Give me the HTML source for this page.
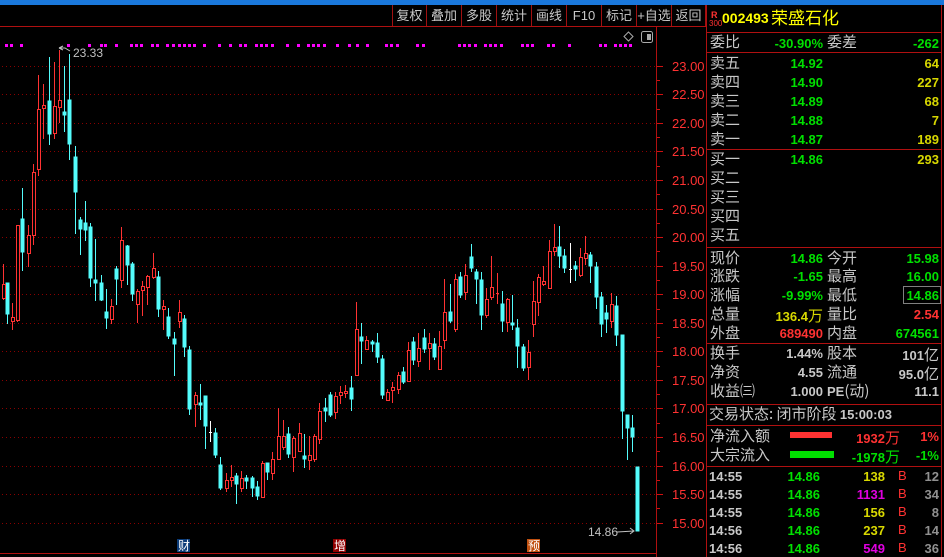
<!DOCTYPE html>
<html><head><meta charset="utf-8"><style>
*{margin:0;padding:0;box-sizing:border-box}
body{width:944px;height:557px;background:#000;overflow:hidden;position:relative;font-family:"Liberation Sans","Noto Sans CJK SC",sans-serif}
.a{position:absolute;white-space:nowrap;line-height:1}
.tb{position:absolute;top:5px;height:21px;border-left:1px solid #a01010;color:#c8c8c8;font-size:13px;text-align:center;line-height:21px;font-family:"Liberation Sans","Noto Sans CJK SC",sans-serif}
.lb{position:absolute;color:#c8c8c8;font-size:15px;line-height:1;font-family:"Noto Sans CJK SC",sans-serif;white-space:nowrap}
.n{position:absolute;font-size:13px;font-weight:bold;line-height:1;text-align:right;white-space:nowrap;font-family:"Liberation Sans","Noto Sans CJK SC",sans-serif}
.g{color:#00e000}.y{color:#d8d800}.r{color:#ff3232}.w{color:#c8c8c8}.m{color:#e000e0}
.hl{position:absolute;left:707px;width:234px;height:1px;background:#b01010}
</style></head><body>
<div class="a" style="left:0;top:0;width:944px;height:5px;background:#1a78dc"></div>
<div class="tb" style="left:392px;width:34px">复权</div>
<div class="tb" style="left:426px;width:35px">叠加</div>
<div class="tb" style="left:461px;width:35px">多股</div>
<div class="tb" style="left:496px;width:35px">统计</div>
<div class="tb" style="left:531px;width:35px">画线</div>
<div class="tb" style="left:566px;width:35px">F10</div>
<div class="tb" style="left:601px;width:35px">标记</div>
<div class="tb" style="left:636px;width:35px">+自选</div>
<div class="tb" style="left:671px;width:35px;border-right:1px solid #a01010">返回</div>
<svg class="a" style="left:0;top:0" width="707" height="557" xmlns="http://www.w3.org/2000/svg">
<line x1="0" y1="26.5" x2="707" y2="26.5" stroke="#b01010"/>
<line x1="656.5" y1="27" x2="656.5" y2="557" stroke="#b01010"/>
<line x1="706.5" y1="5" x2="706.5" y2="557" stroke="#b01010"/>
<line x1="0" y1="553.5" x2="656" y2="553.5" stroke="#b01010"/>
<g stroke="#8a0000" stroke-dasharray="1 3">
<line x1="2" y1="66.5" x2="656" y2="66.5"/><line x1="2" y1="94.5" x2="656" y2="94.5"/><line x1="2" y1="123.5" x2="656" y2="123.5"/><line x1="2" y1="151.5" x2="656" y2="151.5"/><line x1="2" y1="180.5" x2="656" y2="180.5"/><line x1="2" y1="209.5" x2="656" y2="209.5"/><line x1="2" y1="237.5" x2="656" y2="237.5"/><line x1="2" y1="266.5" x2="656" y2="266.5"/><line x1="2" y1="294.5" x2="656" y2="294.5"/><line x1="2" y1="323.5" x2="656" y2="323.5"/><line x1="2" y1="351.5" x2="656" y2="351.5"/><line x1="2" y1="380.5" x2="656" y2="380.5"/><line x1="2" y1="408.5" x2="656" y2="408.5"/><line x1="2" y1="437.5" x2="656" y2="437.5"/><line x1="2" y1="466.5" x2="656" y2="466.5"/><line x1="2" y1="494.5" x2="656" y2="494.5"/><line x1="2" y1="523.5" x2="656" y2="523.5"/>
</g>
<g stroke="#d01010">
<line x1="657" y1="66.5" x2="663" y2="66.5"/><line x1="657" y1="80.5" x2="660" y2="80.5"/><line x1="657" y1="94.5" x2="663" y2="94.5"/><line x1="657" y1="109.5" x2="660" y2="109.5"/><line x1="657" y1="123.5" x2="663" y2="123.5"/><line x1="657" y1="137.5" x2="660" y2="137.5"/><line x1="657" y1="151.5" x2="663" y2="151.5"/><line x1="657" y1="166.5" x2="660" y2="166.5"/><line x1="657" y1="180.5" x2="663" y2="180.5"/><line x1="657" y1="194.5" x2="660" y2="194.5"/><line x1="657" y1="209.5" x2="663" y2="209.5"/><line x1="657" y1="223.5" x2="660" y2="223.5"/><line x1="657" y1="237.5" x2="663" y2="237.5"/><line x1="657" y1="251.5" x2="660" y2="251.5"/><line x1="657" y1="266.5" x2="663" y2="266.5"/><line x1="657" y1="280.5" x2="660" y2="280.5"/><line x1="657" y1="294.5" x2="663" y2="294.5"/><line x1="657" y1="309.5" x2="660" y2="309.5"/><line x1="657" y1="323.5" x2="663" y2="323.5"/><line x1="657" y1="337.5" x2="660" y2="337.5"/><line x1="657" y1="351.5" x2="663" y2="351.5"/><line x1="657" y1="366.5" x2="660" y2="366.5"/><line x1="657" y1="380.5" x2="663" y2="380.5"/><line x1="657" y1="394.5" x2="660" y2="394.5"/><line x1="657" y1="408.5" x2="663" y2="408.5"/><line x1="657" y1="423.5" x2="660" y2="423.5"/><line x1="657" y1="437.5" x2="663" y2="437.5"/><line x1="657" y1="451.5" x2="660" y2="451.5"/><line x1="657" y1="466.5" x2="663" y2="466.5"/><line x1="657" y1="480.5" x2="660" y2="480.5"/><line x1="657" y1="494.5" x2="663" y2="494.5"/><line x1="657" y1="508.5" x2="660" y2="508.5"/><line x1="657" y1="523.5" x2="663" y2="523.5"/>
</g>
<g fill="#ff3232" font-family="Liberation Sans" font-size="13">
<text x="672" y="71">23.00</text><text x="672" y="99">22.50</text><text x="672" y="128">22.00</text><text x="672" y="156">21.50</text><text x="672" y="185">21.00</text><text x="672" y="214">20.50</text><text x="672" y="242">20.00</text><text x="672" y="271">19.50</text><text x="672" y="299">19.00</text><text x="672" y="328">18.50</text><text x="672" y="356">18.00</text><text x="672" y="385">17.50</text><text x="672" y="413">17.00</text><text x="672" y="442">16.50</text><text x="672" y="471">16.00</text><text x="672" y="499">15.50</text><text x="672" y="528">15.00</text>
</g>
<g fill="#ff00ff">
<rect x="5" y="44" width="3" height="3"/><rect x="10" y="44" width="3" height="3"/><rect x="20" y="44" width="3" height="3"/><rect x="67" y="44" width="3" height="3"/><rect x="88" y="44" width="3" height="3"/><rect x="100" y="44" width="3" height="3"/><rect x="104" y="44" width="3" height="3"/><rect x="115" y="44" width="3" height="3"/><rect x="130" y="44" width="3" height="3"/><rect x="135" y="44" width="3" height="3"/><rect x="140" y="44" width="3" height="3"/><rect x="151" y="44" width="3" height="3"/><rect x="156" y="44" width="3" height="3"/><rect x="166" y="44" width="3" height="3"/><rect x="172" y="44" width="3" height="3"/><rect x="178" y="44" width="3" height="3"/><rect x="183" y="44" width="3" height="3"/><rect x="188" y="44" width="3" height="3"/><rect x="193" y="44" width="3" height="3"/><rect x="203" y="44" width="3" height="3"/><rect x="218" y="44" width="3" height="3"/><rect x="229" y="44" width="3" height="3"/><rect x="239" y="44" width="3" height="3"/><rect x="244" y="44" width="3" height="3"/><rect x="255" y="44" width="3" height="3"/><rect x="260" y="44" width="3" height="3"/><rect x="265" y="44" width="3" height="3"/><rect x="271" y="44" width="3" height="3"/><rect x="286" y="44" width="3" height="3"/><rect x="297" y="44" width="3" height="3"/><rect x="307" y="44" width="3" height="3"/><rect x="312" y="44" width="3" height="3"/><rect x="317" y="44" width="3" height="3"/><rect x="323" y="44" width="3" height="3"/><rect x="336" y="44" width="3" height="3"/><rect x="348" y="44" width="3" height="3"/><rect x="356" y="44" width="3" height="3"/><rect x="366" y="44" width="3" height="3"/><rect x="385" y="44" width="3" height="3"/><rect x="390" y="44" width="3" height="3"/><rect x="396" y="44" width="3" height="3"/><rect x="416" y="44" width="3" height="3"/><rect x="422" y="44" width="3" height="3"/><rect x="458" y="44" width="3" height="3"/><rect x="463" y="44" width="3" height="3"/><rect x="468" y="44" width="3" height="3"/><rect x="474" y="44" width="3" height="3"/><rect x="484" y="44" width="3" height="3"/><rect x="489" y="44" width="3" height="3"/><rect x="494" y="44" width="3" height="3"/><rect x="500" y="44" width="3" height="3"/><rect x="521" y="44" width="3" height="3"/><rect x="526" y="44" width="3" height="3"/><rect x="531" y="44" width="3" height="3"/><rect x="547" y="44" width="3" height="3"/><rect x="552" y="44" width="3" height="3"/><rect x="568" y="44" width="3" height="3"/><rect x="599" y="44" width="3" height="3"/><rect x="604" y="44" width="3" height="3"/><rect x="614" y="44" width="3" height="3"/><rect x="619" y="44" width="3" height="3"/><rect x="624" y="44" width="3" height="3"/><rect x="629" y="44" width="3" height="3"/>
</g>
<path d="M628.5 32 L633 36.5 L628.5 41 L624 36.5 Z" fill="none" stroke="#aaa"/>
<rect x="641.5" y="31.5" width="11" height="11" rx="2" fill="none" stroke="#aaa"/><rect x="647" y="34" width="4" height="6" fill="#aaa"/>
<g stroke="#54fcfc" fill="#54fcfc" stroke-width="1">
<line x1="7.5" y1="283" x2="7.5" y2="324"/><rect x="6" y="283" width="3" height="31"/>
<line x1="22.5" y1="188" x2="22.5" y2="271"/><rect x="21" y="219" width="3" height="33"/>
<line x1="49.5" y1="57" x2="49.5" y2="145"/><rect x="48" y="101" width="3" height="33"/>
<line x1="64.5" y1="66" x2="64.5" y2="132"/><rect x="63" y="112" width="3" height="3"/>
<line x1="69.5" y1="54" x2="69.5" y2="160"/><rect x="68" y="100" width="3" height="44"/>
<line x1="75.5" y1="146" x2="75.5" y2="234"/><rect x="74" y="157" width="3" height="35"/>
<line x1="80.5" y1="217" x2="80.5" y2="255"/><rect x="79" y="220" width="3" height="9"/>
<line x1="85.5" y1="201" x2="85.5" y2="241"/><rect x="84" y="223" width="3" height="7"/>
<line x1="90.5" y1="223" x2="90.5" y2="287"/><rect x="89" y="227" width="3" height="51"/>
<line x1="95.5" y1="239" x2="95.5" y2="301"/><rect x="94" y="280" width="3" height="3"/>
<line x1="101.5" y1="275" x2="101.5" y2="301"/><rect x="100" y="283" width="3" height="17"/>
<line x1="106.5" y1="289" x2="106.5" y2="329"/><rect x="105" y="312" width="3" height="6"/>
<line x1="116.5" y1="266" x2="116.5" y2="305"/><rect x="115" y="269" width="3" height="10"/>
<line x1="127.5" y1="245" x2="127.5" y2="285"/><rect x="126" y="246" width="3" height="19"/>
<line x1="132.5" y1="262" x2="132.5" y2="301"/><rect x="131" y="264" width="3" height="30"/>
<line x1="158.5" y1="271" x2="158.5" y2="317"/><rect x="157" y="277" width="3" height="32"/>
<line x1="168.5" y1="308" x2="168.5" y2="339"/><rect x="167" y="317" width="3" height="19"/>
<line x1="174.5" y1="332" x2="174.5" y2="376"/><rect x="173" y="339" width="3" height="5"/>
<line x1="184.5" y1="315" x2="184.5" y2="357"/><rect x="183" y="319" width="3" height="28"/>
<line x1="189.5" y1="346" x2="189.5" y2="415"/><rect x="188" y="350" width="3" height="59"/>
<line x1="200.5" y1="384" x2="200.5" y2="420"/><rect x="199" y="403" width="3" height="2"/>
<line x1="205.5" y1="396" x2="205.5" y2="449"/><rect x="204" y="396" width="3" height="30"/>
<line x1="215.5" y1="428" x2="215.5" y2="458"/><rect x="214" y="433" width="3" height="22"/>
<line x1="220.5" y1="457" x2="220.5" y2="490"/><rect x="219" y="465" width="3" height="23"/>
<line x1="236.5" y1="473" x2="236.5" y2="504"/><rect x="235" y="476" width="3" height="8"/>
<line x1="246.5" y1="475" x2="246.5" y2="489"/><rect x="245" y="478" width="3" height="3"/>
<line x1="252.5" y1="476" x2="252.5" y2="497"/><rect x="251" y="478" width="3" height="10"/>
<line x1="257.5" y1="481" x2="257.5" y2="500"/><rect x="256" y="487" width="3" height="9"/>
<line x1="267.5" y1="463" x2="267.5" y2="480"/><rect x="266" y="463" width="3" height="9"/>
<line x1="288.5" y1="427" x2="288.5" y2="458"/><rect x="287" y="434" width="3" height="20"/>
<line x1="304.5" y1="434" x2="304.5" y2="468"/><rect x="303" y="456" width="3" height="3"/>
<line x1="325.5" y1="398" x2="325.5" y2="422"/><rect x="324" y="408" width="3" height="3"/>
<line x1="330.5" y1="392" x2="330.5" y2="417"/><rect x="329" y="395" width="3" height="20"/>
<line x1="351.5" y1="376" x2="351.5" y2="411"/><rect x="350" y="388" width="3" height="11"/>
<line x1="361.5" y1="323" x2="361.5" y2="364"/><rect x="360" y="337" width="3" height="4"/>
<line x1="372.5" y1="340" x2="372.5" y2="352"/><rect x="371" y="342" width="3" height="2"/>
<line x1="377.5" y1="333" x2="377.5" y2="363"/><rect x="376" y="343" width="3" height="14"/>
<line x1="382.5" y1="355" x2="382.5" y2="399"/><rect x="381" y="359" width="3" height="36"/>
<line x1="403.5" y1="367" x2="403.5" y2="384"/><rect x="402" y="372" width="3" height="10"/>
<line x1="413.5" y1="337" x2="413.5" y2="365"/><rect x="412" y="342" width="3" height="18"/>
<line x1="424.5" y1="329" x2="424.5" y2="353"/><rect x="423" y="338" width="3" height="11"/>
<line x1="434.5" y1="338" x2="434.5" y2="360"/><rect x="433" y="344" width="3" height="13"/>
<line x1="450.5" y1="284" x2="450.5" y2="323"/><rect x="449" y="312" width="3" height="9"/>
<line x1="460.5" y1="272" x2="460.5" y2="298"/><rect x="459" y="277" width="3" height="18"/>
<line x1="471.5" y1="244" x2="471.5" y2="272"/><rect x="470" y="257" width="3" height="11"/>
<line x1="476.5" y1="269" x2="476.5" y2="304"/><rect x="475" y="272" width="3" height="7"/>
<line x1="481.5" y1="272" x2="481.5" y2="330"/><rect x="480" y="280" width="3" height="35"/>
<line x1="502.5" y1="291" x2="502.5" y2="332"/><rect x="501" y="304" width="3" height="17"/>
<line x1="512.5" y1="295" x2="512.5" y2="330"/><rect x="511" y="323" width="3" height="2"/>
<line x1="517.5" y1="319" x2="517.5" y2="368"/><rect x="516" y="328" width="3" height="18"/>
<line x1="523.5" y1="344" x2="523.5" y2="371"/><rect x="522" y="347" width="3" height="21"/>
<line x1="559.5" y1="226" x2="559.5" y2="268"/><rect x="558" y="247" width="3" height="9"/>
<line x1="564.5" y1="249" x2="564.5" y2="273"/><rect x="563" y="256" width="3" height="12"/>
<line x1="575.5" y1="261" x2="575.5" y2="281"/><rect x="574" y="266" width="3" height="3"/>
<line x1="590.5" y1="252" x2="590.5" y2="283"/><rect x="589" y="255" width="3" height="11"/>
<line x1="596.5" y1="262" x2="596.5" y2="309"/><rect x="595" y="267" width="3" height="30"/>
<line x1="601.5" y1="292" x2="601.5" y2="337"/><rect x="600" y="297" width="3" height="27"/>
<line x1="606.5" y1="305" x2="606.5" y2="333"/><rect x="605" y="313" width="3" height="6"/>
<line x1="616.5" y1="296" x2="616.5" y2="346"/><rect x="615" y="306" width="3" height="29"/>
<line x1="622.5" y1="335" x2="622.5" y2="439"/><rect x="621" y="335" width="3" height="76"/>
<line x1="627.5" y1="415" x2="627.5" y2="460"/><rect x="626" y="415" width="3" height="13"/>
<line x1="632.5" y1="415" x2="632.5" y2="452"/><rect x="631" y="428" width="3" height="9"/>
<rect x="636" y="467" width="3" height="64"/>
</g>
<g stroke="#ff3232" fill="#000" stroke-width="1">
<line x1="3.5" y1="264" x2="3.5" y2="300"/><rect x="2.5" y="284.5" width="3" height="14"/>
<line x1="12.5" y1="303" x2="12.5" y2="330"/><rect x="11.5" y="317.5" width="3" height="4"/>
<line x1="17.5" y1="225" x2="17.5" y2="322"/><rect x="16.5" y="225.5" width="3" height="95"/>
<line x1="28.5" y1="225" x2="28.5" y2="267"/><rect x="27.5" y="235.5" width="3" height="18"/>
<line x1="33.5" y1="164" x2="33.5" y2="245"/><rect x="32.5" y="172.5" width="3" height="63"/>
<line x1="38.5" y1="75" x2="38.5" y2="176"/><rect x="37.5" y="109.5" width="3" height="60"/>
<line x1="43.5" y1="84" x2="43.5" y2="139"/><rect x="42.5" y="105.5" width="3" height="3"/>
<line x1="54.5" y1="62" x2="54.5" y2="139"/><rect x="53.5" y="106.5" width="3" height="27"/>
<line x1="59.5" y1="50" x2="59.5" y2="123"/><rect x="58.5" y="100.5" width="3" height="7"/>
<line x1="111.5" y1="299" x2="111.5" y2="324"/><rect x="110.5" y="306.5" width="3" height="13"/>
<line x1="121.5" y1="227" x2="121.5" y2="288"/><rect x="120.5" y="240.5" width="3" height="40"/>
<line x1="137.5" y1="289" x2="137.5" y2="323"/><rect x="136.5" y="291.5" width="3" height="13"/>
<line x1="142.5" y1="281" x2="142.5" y2="316"/><rect x="141.5" y="286.5" width="3" height="4"/>
<line x1="147.5" y1="275" x2="147.5" y2="305"/><rect x="146.5" y="276.5" width="3" height="11"/>
<line x1="153.5" y1="253" x2="153.5" y2="279"/><rect x="152.5" y="268.5" width="3" height="9"/>
<line x1="163.5" y1="300" x2="163.5" y2="330"/><rect x="162.5" y="306.5" width="3" height="3"/>
<line x1="179.5" y1="300" x2="179.5" y2="328"/><rect x="178.5" y="312.5" width="3" height="9"/>
<line x1="195.5" y1="392" x2="195.5" y2="427"/><rect x="194.5" y="395.5" width="3" height="9"/>
<line x1="226.5" y1="473" x2="226.5" y2="492"/><rect x="225.5" y="480.5" width="3" height="8"/>
<line x1="231.5" y1="465" x2="231.5" y2="487"/><rect x="230.5" y="477.5" width="3" height="3"/>
<line x1="241.5" y1="471" x2="241.5" y2="492"/><rect x="240.5" y="478.5" width="3" height="10"/>
<line x1="262.5" y1="461" x2="262.5" y2="498"/><rect x="261.5" y="463.5" width="3" height="34"/>
<line x1="272.5" y1="452" x2="272.5" y2="480"/><rect x="271.5" y="459.5" width="3" height="14"/>
<line x1="278.5" y1="408" x2="278.5" y2="459"/><rect x="277.5" y="436.5" width="3" height="23"/>
<line x1="283.5" y1="420" x2="283.5" y2="450"/><rect x="282.5" y="436.5" width="3" height="11"/>
<line x1="293.5" y1="436" x2="293.5" y2="472"/><rect x="292.5" y="438.5" width="3" height="19"/>
<line x1="299.5" y1="423" x2="299.5" y2="451"/><rect x="298.5" y="433.5" width="3" height="18"/>
<line x1="309.5" y1="436" x2="309.5" y2="470"/><rect x="308.5" y="455.5" width="3" height="5"/>
<line x1="314.5" y1="434" x2="314.5" y2="462"/><rect x="313.5" y="436.5" width="3" height="23"/>
<line x1="319.5" y1="403" x2="319.5" y2="444"/><rect x="318.5" y="411.5" width="3" height="28"/>
<line x1="335.5" y1="392" x2="335.5" y2="419"/><rect x="334.5" y="396.5" width="3" height="16"/>
<line x1="340.5" y1="386" x2="340.5" y2="404"/><rect x="339.5" y="392.5" width="3" height="3"/>
<line x1="345.5" y1="385" x2="345.5" y2="398"/><rect x="344.5" y="391.5" width="3" height="2"/>
<line x1="356.5" y1="302" x2="356.5" y2="375"/><rect x="355.5" y="329.5" width="3" height="46"/>
<line x1="366.5" y1="336" x2="366.5" y2="349"/><rect x="365.5" y="340.5" width="3" height="9"/>
<line x1="387.5" y1="389" x2="387.5" y2="400"/><rect x="386.5" y="392.5" width="3" height="8"/>
<line x1="392.5" y1="382" x2="392.5" y2="403"/><rect x="391.5" y="387.5" width="3" height="3"/>
<line x1="398.5" y1="372" x2="398.5" y2="394"/><rect x="397.5" y="375.5" width="3" height="14"/>
<line x1="408.5" y1="342" x2="408.5" y2="381"/><rect x="407.5" y="350.5" width="3" height="31"/>
<line x1="418.5" y1="333" x2="418.5" y2="367"/><rect x="417.5" y="348.5" width="3" height="13"/>
<line x1="429.5" y1="333" x2="429.5" y2="370"/><rect x="428.5" y="343.5" width="3" height="5"/>
<line x1="439.5" y1="331" x2="439.5" y2="369"/><rect x="438.5" y="346.5" width="3" height="23"/>
<line x1="444.5" y1="279" x2="444.5" y2="349"/><rect x="443.5" y="312.5" width="3" height="28"/>
<line x1="455.5" y1="274" x2="455.5" y2="332"/><rect x="454.5" y="279.5" width="3" height="50"/>
<line x1="465.5" y1="264" x2="465.5" y2="300"/><rect x="464.5" y="275.5" width="3" height="17"/>
<line x1="486.5" y1="288" x2="486.5" y2="318"/><rect x="485.5" y="299.5" width="3" height="16"/>
<line x1="491.5" y1="256" x2="491.5" y2="300"/><rect x="490.5" y="287.5" width="3" height="10"/>
<line x1="497.5" y1="273" x2="497.5" y2="304"/><line x1="496" y1="293.5" x2="499" y2="293.5"/>
<line x1="507.5" y1="298" x2="507.5" y2="332"/><rect x="506.5" y="299.5" width="3" height="23"/>
<line x1="528.5" y1="340" x2="528.5" y2="380"/><rect x="527.5" y="352.5" width="3" height="15"/>
<line x1="533.5" y1="281" x2="533.5" y2="337"/><rect x="532.5" y="301.5" width="3" height="23"/>
<line x1="538.5" y1="274" x2="538.5" y2="316"/><rect x="537.5" y="277.5" width="3" height="25"/>
<line x1="543.5" y1="266" x2="543.5" y2="286"/><rect x="542.5" y="281.5" width="3" height="3"/>
<line x1="549.5" y1="240" x2="549.5" y2="288"/><rect x="548.5" y="251.5" width="3" height="37"/>
<line x1="554.5" y1="224" x2="554.5" y2="256"/><rect x="553.5" y="247.5" width="3" height="4"/>
<line x1="580.5" y1="248" x2="580.5" y2="277"/><rect x="579.5" y="257.5" width="3" height="18"/>
<line x1="585.5" y1="236" x2="585.5" y2="265"/><rect x="584.5" y="253.5" width="3" height="5"/>
<line x1="611.5" y1="293" x2="611.5" y2="328"/><rect x="610.5" y="304.5" width="3" height="17"/>
</g>
<g stroke="#fff"><line x1="210.5" y1="421" x2="210.5" y2="442"/><line x1="209" y1="432.5" x2="212" y2="432.5"/><line x1="570.5" y1="243" x2="570.5" y2="283"/><line x1="569" y1="269.5" x2="572" y2="269.5"/></g>
<path d="M59 48 L63 46 M59 48 L63 50 M59 48 L65 48 L70 51" stroke="#c0c0c0" fill="none"/>
<text x="73" y="57" fill="#c0c0c0" font-family="Liberation Sans" font-size="12">23.33</text>
<text x="588" y="536" fill="#c0c0c0" font-family="Liberation Sans" font-size="12">14.86</text>
<path d="M617 532 L634 531 M630 528 L634 531 L630 534" stroke="#c0c0c0" fill="none"/>
<rect x="177" y="539" width="13" height="13" fill="#0c3c78"/>
<text x="178" y="550" fill="#fff" font-family="Noto Sans CJK SC" font-size="12">财</text>
<rect x="333" y="539" width="13" height="13" fill="#900000"/>
<text x="334" y="550" fill="#fff" font-family="Noto Sans CJK SC" font-size="12">增</text>
<rect x="527" y="539" width="13" height="13" fill="#c05010"/>
<text x="528" y="550" fill="#fff" font-family="Noto Sans CJK SC" font-size="12">预</text>
</svg>
<!-- right panel -->
<div class="a" style="left:941px;top:5px;width:1px;height:552px;background:#b01010"></div>
<div class="a" style="left:711px;top:11px;font-size:9px;color:#ff3232;font-weight:bold">R</div>
<div class="a" style="left:709px;top:20px;font-size:8px;color:#ff3232">300</div>
<div class="a" style="left:722px;top:11px;font-size:14px;color:#ffff00;font-weight:bold">002493</div>
<div class="a" style="left:771px;top:8px;font-size:17px;color:#ffff00;font-family:'Noto Sans CJK SC',sans-serif">荣盛石化</div>
<div class="hl" style="top:32px"></div>
<div class="lb" style="left:710px;top:34px">委比</div>
<div class="n g" style="left:740px;top:37px;width:83px">-30.90%</div>
<div class="lb" style="left:827px;top:34px">委差</div>
<div class="n g" style="left:860px;top:37px;width:79px">-262</div>
<div class="hl" style="top:52px"></div>
<div class="lb" style="left:710px;top:55px">卖五</div><div class="n g" style="left:740px;top:57px;width:83px">14.92</div><div class="n y" style="left:860px;top:57px;width:79px">64</div>
<div class="lb" style="left:710px;top:74px">卖四</div><div class="n g" style="left:740px;top:76px;width:83px">14.90</div><div class="n y" style="left:860px;top:76px;width:79px">227</div>
<div class="lb" style="left:710px;top:93px">卖三</div><div class="n g" style="left:740px;top:95px;width:83px">14.89</div><div class="n y" style="left:860px;top:95px;width:79px">68</div>
<div class="lb" style="left:710px;top:112px">卖二</div><div class="n g" style="left:740px;top:114px;width:83px">14.88</div><div class="n y" style="left:860px;top:114px;width:79px">7</div>
<div class="lb" style="left:710px;top:131px">卖一</div><div class="n g" style="left:740px;top:133px;width:83px">14.87</div><div class="n y" style="left:860px;top:133px;width:79px">189</div>
<div class="hl" style="top:149px"></div>
<div class="lb" style="left:710px;top:151px">买一</div><div class="n g" style="left:740px;top:153px;width:83px">14.86</div><div class="n y" style="left:860px;top:153px;width:79px">293</div>
<div class="lb" style="left:710px;top:170px">买二</div>
<div class="lb" style="left:710px;top:189px">买三</div>
<div class="lb" style="left:710px;top:208px">买四</div>
<div class="lb" style="left:710px;top:227px">买五</div>
<div class="hl" style="top:247px"></div>
<div class="lb" style="left:710px;top:250px">现价</div><div class="n g" style="left:740px;top:252px;width:83px">14.86</div><div class="lb" style="left:827px;top:250px">今开</div><div class="n g" style="left:860px;top:252px;width:79px">15.98</div>
<div class="lb" style="left:710px;top:268px">涨跌</div><div class="n g" style="left:740px;top:270px;width:83px">-1.65</div><div class="lb" style="left:827px;top:268px">最高</div><div class="n g" style="left:860px;top:270px;width:79px">16.00</div>
<div class="lb" style="left:710px;top:287px">涨幅</div><div class="n g" style="left:740px;top:289px;width:83px">-9.99%</div><div class="lb" style="left:827px;top:287px">最低</div>
<div class="a" style="left:903px;top:286px;width:38px;height:18px;border:1px solid #808080"></div><div class="n g" style="left:860px;top:289px;width:79px">14.86</div>
<div class="lb" style="left:710px;top:306px">总量</div><div class="n y" style="left:740px;top:308px;width:83px">136.4<span style="font-weight:normal;font-size:15px;font-family:'Noto Sans CJK SC'">万</span></div><div class="lb" style="left:827px;top:306px">量比</div><div class="n r" style="left:860px;top:308px;width:79px">2.54</div>
<div class="lb" style="left:710px;top:325px">外盘</div><div class="n r" style="left:740px;top:327px;width:83px">689490</div><div class="lb" style="left:827px;top:325px">内盘</div><div class="n g" style="left:860px;top:327px;width:79px">674561</div>
<div class="hl" style="top:343px"></div>
<div class="lb" style="left:710px;top:345px">换手</div><div class="n w" style="left:740px;top:347px;width:83px">1.44%</div><div class="lb" style="left:827px;top:345px">股本</div><div class="n w" style="left:860px;top:347px;width:79px">101<span style="font-weight:normal;font-size:15px;font-family:'Noto Sans CJK SC'">亿</span></div>
<div class="lb" style="left:710px;top:364px">净资</div><div class="n w" style="left:740px;top:366px;width:83px">4.55</div><div class="lb" style="left:827px;top:364px">流通</div><div class="n w" style="left:860px;top:366px;width:79px">95.0<span style="font-weight:normal;font-size:15px;font-family:'Noto Sans CJK SC'">亿</span></div>
<div class="lb" style="left:710px;top:383px">收益㈢</div><div class="n w" style="left:740px;top:385px;width:83px">1.000</div><div class="lb" style="left:827px;top:383px"><b style="font-family:'Liberation Sans';font-size:13px">PE</b>(动)</div><div class="n w" style="left:860px;top:385px;width:79px">11.1</div>
<div class="hl" style="top:404px"></div>
<div class="lb" style="left:709px;top:406px">交易状态: 闭市阶段 <b style="font-family:'Liberation Sans';font-size:13px">15:00:03</b></div>
<div class="hl" style="top:425px"></div>
<div class="lb" style="left:710px;top:428px">净流入额</div>
<div class="a" style="left:790px;top:432px;width:42px;height:6px;background:#ff3232"></div>
<div class="n r" style="left:830px;top:430px;width:70px">1932<span style="font-weight:normal;font-size:15px;font-family:'Noto Sans CJK SC'">万</span></div><div class="n r" style="left:900px;top:430px;width:39px">1%</div>
<div class="lb" style="left:710px;top:447px">大宗流入</div>
<div class="a" style="left:790px;top:451px;width:44px;height:7px;background:#00e000"></div>
<div class="n g" style="left:830px;top:449px;width:70px">-1978<span style="font-weight:normal;font-size:15px;font-family:'Noto Sans CJK SC'">万</span></div><div class="n g" style="left:900px;top:449px;width:39px">-1%</div>
<div class="hl" style="top:466px"></div>
<div class="n w" style="left:709px;top:470px;text-align:left">14:55</div><div class="n g" style="left:760px;top:470px;width:60px">14.86</div><div class="n y" style="left:840px;top:470px;width:45px">138</div><div class="a r" style="left:898px;top:469px;font-size:13px">B</div><div class="n w" style="left:910px;top:470px;width:29px;color:#909090">12</div>
<div class="n w" style="left:709px;top:488px;text-align:left">14:55</div><div class="n g" style="left:760px;top:488px;width:60px">14.86</div><div class="n m" style="left:840px;top:488px;width:45px">1131</div><div class="a r" style="left:898px;top:487px;font-size:13px">B</div><div class="n w" style="left:910px;top:488px;width:29px;color:#909090">34</div>
<div class="n w" style="left:709px;top:506px;text-align:left">14:55</div><div class="n g" style="left:760px;top:506px;width:60px">14.86</div><div class="n y" style="left:840px;top:506px;width:45px">156</div><div class="a r" style="left:898px;top:505px;font-size:13px">B</div><div class="n w" style="left:910px;top:506px;width:29px;color:#909090">8</div>
<div class="n w" style="left:709px;top:524px;text-align:left">14:56</div><div class="n g" style="left:760px;top:524px;width:60px">14.86</div><div class="n y" style="left:840px;top:524px;width:45px">237</div><div class="a r" style="left:898px;top:523px;font-size:13px">B</div><div class="n w" style="left:910px;top:524px;width:29px;color:#909090">14</div>
<div class="n w" style="left:709px;top:542px;text-align:left">14:56</div><div class="n g" style="left:760px;top:542px;width:60px">14.86</div><div class="n m" style="left:840px;top:542px;width:45px">549</div><div class="a r" style="left:898px;top:541px;font-size:13px">B</div><div class="n w" style="left:910px;top:542px;width:29px;color:#909090">36</div>
</body></html>
